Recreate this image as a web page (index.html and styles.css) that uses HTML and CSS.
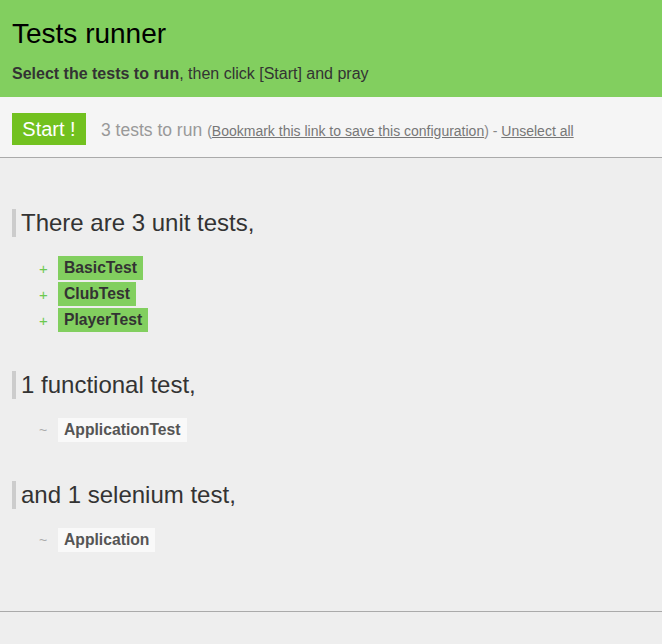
FILE: index.html
```html
<!DOCTYPE html>
<html>
<head>
<meta charset="utf-8">
<title>Tests runner</title>
<link rel="stylesheet" href="styles.css">
</head>
<body>
<header class="header">
  <h1 class="title">Tests runner</h1>
  <p class="subtitle"><strong>Select the tests to run</strong>, then click [Start] and pray</p>
</header>
<div class="toolbar">
  <button class="start">Start !</button>
  <span class="count">3 tests to run</span>
  <span class="links">(<a href="#">Bookmark this link to save this configuration</a>) - <a href="#">Unselect all</a></span>
</div>
<main class="main">
  <section class="group">
    <h2 class="group-title">There are 3 unit tests,</h2>
    <ul class="tests">
      <li class="test selected"><span class="mark">+</span><span class="name">BasicTest</span></li>
      <li class="test selected"><span class="mark">+</span><span class="name">ClubTest</span></li>
      <li class="test selected"><span class="mark">+</span><span class="name">PlayerTest</span></li>
    </ul>
  </section>
  <section class="group">
    <h2 class="group-title">1 functional test,</h2>
    <ul class="tests">
      <li class="test"><span class="mark">~</span><span class="name">ApplicationTest</span></li>
    </ul>
  </section>
  <section class="group">
    <h2 class="group-title">and 1 selenium test,</h2>
    <ul class="tests">
      <li class="test"><span class="mark">~</span><span class="name">Application</span></li>
    </ul>
  </section>
</main>
<footer class="footer"></footer>
</body>
</html>
```
FILE: styles.css
```css
* { box-sizing: border-box; }
html, body {
  margin: 0;
  padding: 0;
  background: #eeeeee;
  font-family: "Liberation Sans", Arial, sans-serif;
  color: #333;
}
.header {
  background: #82cf5f;
  height: 97px;
  padding: 18px 12px 0;
}
.title {
  margin: 0;
  font-size: 28px;
  line-height: 32px;
  font-weight: normal;
  color: #000;
}
.subtitle {
  margin: 14px 0 0;
  font-size: 16px;
  line-height: 20px;
  color: #333;
}
.toolbar {
  background: #f5f5f5;
  border-bottom: 1px solid #aaaaaa;
  height: 61px;
  padding: 16px 12px 0;
  display: flex;
  align-items: baseline;
}
.start {
  background: #72c11f;
  color: #fff;
  border: 0;
  width: 74px;
  height: 32px;
  padding: 0;
  font-family: "Liberation Sans", Arial, sans-serif;
  font-size: 20px;
  line-height: 32px;
  text-align: center;
  margin: 0 15px 0 0;
}
.count {
  font-size: 17.5px;
  color: #999;
}
.links {
  font-size: 14px;
  color: #888;
  margin-left: 5px;
}
.links a { color: #777; }
.main {
  padding: 51px 0 0;
}
.group + .group { margin-top: 39px; }
.group-title {
  margin: 0 0 19px 12px;
  border-left: 4px solid #cccccc;
  padding-left: 5px;
  font-size: 24px;
  line-height: 28px;
  font-weight: normal;
  color: #333;
}
.tests {
  list-style: none;
  margin: 0;
  padding: 0 0 0 38px;
}
.test {
  display: flex;
  align-items: center;
  height: 24px;
  margin-bottom: 2px;
}
.mark {
  width: 20px;
  font-size: 14px;
  color: #aaa;
  text-align: left;
  padding-left: 1px;
}
.selected .mark { color: #6cc94e; font-size: 15px; }
.name {
  height: 24px;
  line-height: 24px;
  padding: 0 6px;
  font-size: 15.7px;
  font-weight: bold;
  color: #555;
  background: #f9f9f9;
}
.selected .name {
  background: #82cf5f;
  color: #333;
}
.footer {
  margin-top: 59px;
  border-top: 1px solid #aaaaaa;
  height: 40px;
}
```
